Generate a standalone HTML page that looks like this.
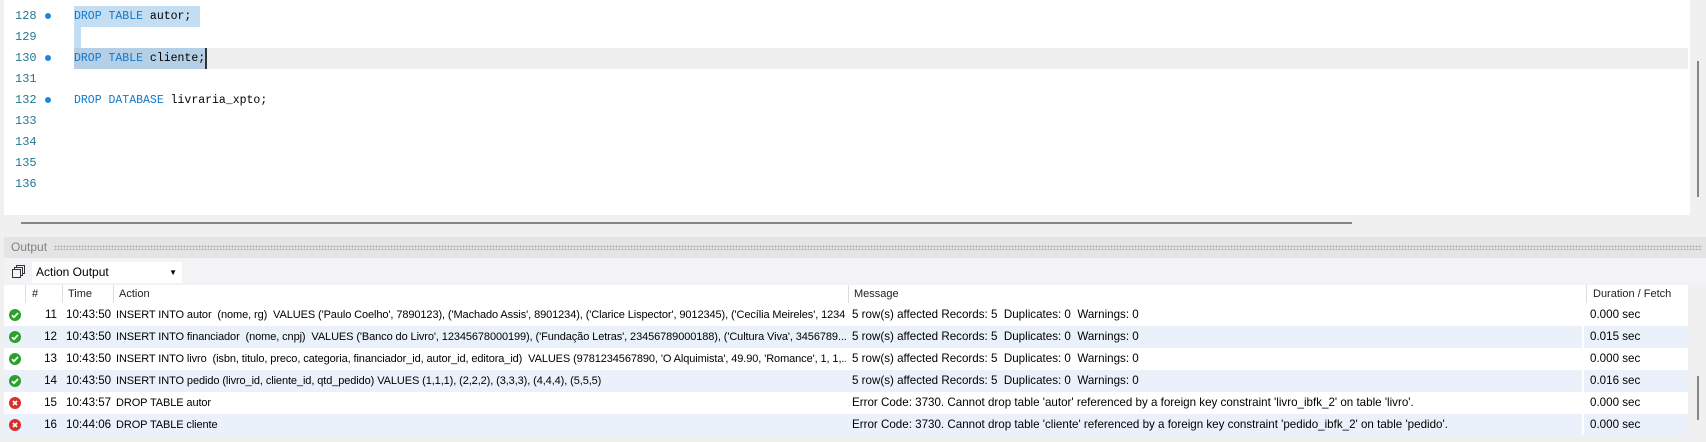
<!DOCTYPE html>
<html><head><meta charset="utf-8"><style>
*{margin:0;padding:0;box-sizing:border-box}
body{width:1706px;height:442px;overflow:hidden;background:#f0f0f0;font-family:"Liberation Sans",sans-serif;position:relative}
.ed{position:absolute;left:4px;top:0;width:1686px;height:215px;background:#fff}
.ln{position:absolute;left:11px;font:12px "Liberation Mono",monospace;color:#237893;height:21px;line-height:21px}
.dot{position:absolute;left:41px;width:6px;height:6px;border-radius:50%;background:#1a88e0}
.code{position:absolute;left:70px;font:11.5px "Liberation Mono",monospace;height:21px;line-height:21px;white-space:pre;color:#000}
.k{color:#0f7acc}
.sb{position:absolute;background:#868686}
.oh{position:absolute;left:4px;top:237px;width:1702px;height:21px;background:#e4e4e4;font-size:12px;color:#808080;line-height:21px;padding-left:7px}
.dots{position:absolute;left:50px;right:4px;top:8px;height:5px;background-image:radial-gradient(#b0b0b0 0.8px,transparent 0.9px);background-size:3px 3px}
.tb{position:absolute;left:4px;top:258px;width:1702px;height:27px;background:#f3f3f5}
.dd{position:absolute;left:32px;top:262px;width:150px;height:21px;background:#fff;font-size:12px;line-height:21px;padding-left:4px}
.tbl{position:absolute;left:4px;top:285px;width:1684px;height:150px;background:#fff}
.row{position:absolute;left:0;width:1684px;height:22px;font-size:11.6px;line-height:22px;white-space:pre;color:#000}
.row.s{background:#eaf1fb}
.row span{position:absolute;top:0;overflow:hidden}
.row span.a{font-size:11px;letter-spacing:-0.1px}
.hd{position:absolute;top:0;height:18px;font-size:11px;line-height:18px;color:#222}
.vd{position:absolute;top:0;width:1px;height:18px;background:#ddd}
.ic{position:absolute;left:5px;top:5px;width:12px;height:12px;border-radius:50%}
</style></head><body>
<div class="ed">
 <div style="position:absolute;left:70px;top:6px;width:126px;height:21px;background:#c3ddf3"></div>
 <div style="position:absolute;left:70px;top:27px;width:7px;height:21px;background:#c3ddf3"></div>
 <div style="position:absolute;left:70px;top:48px;width:1614px;height:21px;background:#eeeeee"></div>
 <div style="position:absolute;left:70px;top:48px;width:131px;height:21px;background:#b4cfe6"></div>
 <div style="position:absolute;left:201px;top:48px;width:2px;height:21px;background:#333"></div>
 <div class="ln" style="top:6px">128</div><div class="dot" style="top:13px"></div><div class="code" style="top:6px"><span class="k">DROP TABLE</span> autor;</div>
 <div class="ln" style="top:27px">129</div>
 <div class="ln" style="top:48px">130</div><div class="dot" style="top:55px"></div><div class="code" style="top:48px"><span class="k">DROP TABLE</span> cliente;</div>
 <div class="ln" style="top:69px">131</div>
 <div class="ln" style="top:90px">132</div><div class="dot" style="top:97px"></div><div class="code" style="top:90px"><span class="k">DROP DATABASE</span> livraria_xpto;</div>
 <div class="ln" style="top:111px">133</div>
 <div class="ln" style="top:132px">134</div>
 <div class="ln" style="top:153px">135</div>
 <div class="ln" style="top:174px">136</div>
</div>
<div class="sb" style="left:1697px;top:61px;width:2px;height:136px"></div>
<div class="sb" style="left:21px;top:222px;width:1331px;height:2px"></div>
<div class="oh">Output<div class="dots"></div></div>
<div class="tb"></div>
<svg style="position:absolute;left:11px;top:265px" width="14" height="14" viewBox="0 0 14 14"><rect x="1.5" y="4.5" width="8" height="8" fill="none" stroke="#333"/><path d="M3.5 4.5V2.5h8v8h-2M5.5 2.5V0.5h8v8h-2" fill="none" stroke="#333"/></svg>
<div class="dd">Action Output<span style="position:absolute;right:5px;top:0;font-size:8px">▼</span></div>
<div class="tbl">
 <div class="vd" style="left:21px"></div><div class="vd" style="left:58px"></div><div class="vd" style="left:109px"></div><div class="vd" style="left:844px"></div><div class="vd" style="left:1582px"></div>
 <div class="hd" style="left:28px">#</div><div class="hd" style="left:64px">Time</div><div class="hd" style="left:115px">Action</div><div class="hd" style="left:850px">Message</div><div class="hd" style="left:1589px">Duration / Fetch</div>
</div>
<div style="position:absolute;left:4px;top:304px;width:1684px">
 <div class="row" style="top:0"><div class="ic" style="background:#2ca02c"></div><svg style="position:absolute;left:5px;top:5px" width="12" height="12"><path d="M3 6.2l2 2 4-4.2" stroke="#fff" stroke-width="1.8" fill="none"/></svg><span style="left:22px;width:31px;text-align:right">11</span><span style="left:62px">10:43:50</span><span class="a" style="left:112px;width:730px">INSERT INTO autor  (nome, rg)  VALUES ('Paulo Coelho', 7890123), ('Machado Assis', 8901234), ('Clarice Lispector', 9012345), ('Cecília Meireles', 1234...</span><span style="left:848px">5 row(s) affected Records: 5  Duplicates: 0  Warnings: 0</span><span style="left:1586px">0.000 sec</span></div>
 <div class="row s" style="top:22px"><div class="ic" style="background:#2ca02c"></div><svg style="position:absolute;left:5px;top:5px" width="12" height="12"><path d="M3 6.2l2 2 4-4.2" stroke="#fff" stroke-width="1.8" fill="none"/></svg><span style="left:22px;width:31px;text-align:right">12</span><span style="left:62px">10:43:50</span><span class="a" style="left:112px;width:730px">INSERT INTO financiador  (nome, cnpj)  VALUES ('Banco do Livro', 12345678000199), ('Fundação Letras', 23456789000188), ('Cultura Viva', 3456789...</span><span style="left:848px">5 row(s) affected Records: 5  Duplicates: 0  Warnings: 0</span><span style="left:1586px">0.015 sec</span></div>
 <div class="row" style="top:44px"><div class="ic" style="background:#2ca02c"></div><svg style="position:absolute;left:5px;top:5px" width="12" height="12"><path d="M3 6.2l2 2 4-4.2" stroke="#fff" stroke-width="1.8" fill="none"/></svg><span style="left:22px;width:31px;text-align:right">13</span><span style="left:62px">10:43:50</span><span class="a" style="left:112px;width:730px">INSERT INTO livro  (isbn, titulo, preco, categoria, financiador_id, autor_id, editora_id)  VALUES (9781234567890, 'O Alquimista', 49.90, 'Romance', 1, 1,...</span><span style="left:848px">5 row(s) affected Records: 5  Duplicates: 0  Warnings: 0</span><span style="left:1586px">0.000 sec</span></div>
 <div class="row s" style="top:66px"><div class="ic" style="background:#2ca02c"></div><svg style="position:absolute;left:5px;top:5px" width="12" height="12"><path d="M3 6.2l2 2 4-4.2" stroke="#fff" stroke-width="1.8" fill="none"/></svg><span style="left:22px;width:31px;text-align:right">14</span><span style="left:62px">10:43:50</span><span class="a" style="left:112px;width:730px">INSERT INTO pedido (livro_id, cliente_id, qtd_pedido) VALUES (1,1,1), (2,2,2), (3,3,3), (4,4,4), (5,5,5)</span><span style="left:848px">5 row(s) affected Records: 5  Duplicates: 0  Warnings: 0</span><span style="left:1586px">0.016 sec</span></div>
 <div class="row" style="top:88px"><div class="ic" style="background:#d9302c"></div><svg style="position:absolute;left:5px;top:5px" width="12" height="12"><path d="M4 4l4 4M8 4l-4 4" stroke="#fff" stroke-width="1.7"/></svg><span style="left:22px;width:31px;text-align:right">15</span><span style="left:62px">10:43:57</span><span class="a" style="left:112px">DROP TABLE autor</span><span style="left:848px">Error Code: 3730. Cannot drop table 'autor' referenced by a foreign key constraint 'livro_ibfk_2' on table 'livro'.</span><span style="left:1586px">0.000 sec</span></div>
 <div class="row s" style="top:110px"><div class="ic" style="background:#d9302c"></div><svg style="position:absolute;left:5px;top:5px" width="12" height="12"><path d="M4 4l4 4M8 4l-4 4" stroke="#fff" stroke-width="1.7"/></svg><span style="left:22px;width:31px;text-align:right">16</span><span style="left:62px">10:44:06</span><span class="a" style="left:112px">DROP TABLE cliente</span><span style="left:848px">Error Code: 3730. Cannot drop table 'cliente' referenced by a foreign key constraint 'pedido_ibfk_2' on table 'pedido'.</span><span style="left:1586px">0.000 sec</span></div>
</div>
<div style="position:absolute;left:1582px;top:304px;width:2px;height:131px;background:#fff"></div>
<div class="sb" style="left:1697px;top:376px;width:2px;height:44px"></div>
</body></html>
